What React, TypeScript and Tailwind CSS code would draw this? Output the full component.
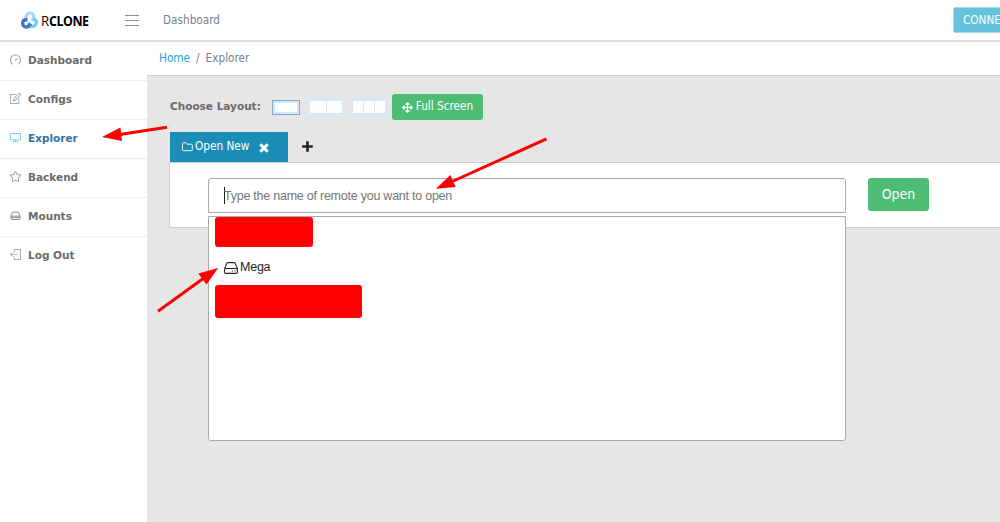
import type { ReactNode } from 'react';
import { FaArrowsAlt } from 'react-icons/fa';
import { SlLogout, SlNote, SlScreenDesktop, SlSpeedometer, SlStar } from 'react-icons/sl';

interface NavItem {
  label: string;
  icon: ReactNode;
  active?: boolean;
}

function DriveIcon() {
  return (
    <svg viewBox="0 0 11 11" className="h-[11px] w-[11px]" fill="none" stroke="currentColor" strokeWidth="1">
      <path d="M1 6.200 2.200 2.800Q2.400 2.200 3 2.200h5q.6 0 .8.600L10 6.200v2.600q0 .7-.7.700H1.700Q1 9.500 1 8.800ZM1 6.200h9M1 7.700h9" />
    </svg>
  );
}

const navItems: NavItem[] = [
  { label: 'Dashboard', icon: <SlSpeedometer /> },
  { label: 'Configs', icon: <SlNote /> },
  { label: 'Explorer', icon: <SlScreenDesktop />, active: true },
  { label: 'Backend', icon: <SlStar /> },
  { label: 'Mounts', icon: <DriveIcon /> },
  { label: 'Log Out', icon: <SlLogout /> },
];

function Logo() {
  return (
    <div className="flex w-[68px] items-center">
      <svg viewBox="0 0 17 19" className="mt-px h-[19px] w-[17px] shrink-0" fill="none" strokeWidth="3.400">
        <path d="M5.700 7.500C4.200 5 6 2 8.900 2c3.200 0 4.700 3 3.300 5.600L10.900 9.800" stroke="#a6dbf8" />
        <path d="M11.800 8c3.300 0 4.400 2.700 3 5.300-1.400 2.900-4.900 3-6.400.5L7.300 11.800" stroke="#70caf2" />
        <path d="M6.500 8.800H4.800C1.700 8.800.9 12.500 2.600 14.700c1.700 2.100 4.700 1.700 6-.6l1-1.500" stroke="#3978ba" />
      </svg>
      <span className="-mt-px ml-[3px] flex font-['Open_Sans',sans-serif] text-[15px] leading-5 text-black">
        <span className="inline-block w-2 origin-left scale-x-[0.88]">R</span>
        <span className="inline-block w-10 origin-left scale-x-[0.83] font-bold tracking-[-0.6px]">CLONE</span>
      </span>
    </div>
  );
}

function Header() {
  return (
    <header className="flex h-[42px] shrink-0 items-center border-b-2 border-[#dce1e5] bg-white pl-[21px]">
      <Logo />
      <svg viewBox="0 0 14 12" className="ml-9 mt-px h-3 w-3.5" stroke="#8493a1" strokeWidth="1.200">
        <path d="M0 .5h14M0 5.500h14M0 10.500h14" />
      </svg>
      <span className="ml-6 pt-px text-[#73818f]">Dashboard</span>
      <button className="-mr-[43px] ml-auto h-[26px] w-[90px] shrink-0 rounded-[2px] border border-[#a9d5e4] bg-[#63c2de] pl-[9px] pt-px text-left text-white">
        CONNECTED
      </button>
    </header>
  );
}

function Sidebar() {
  return (
    <nav className="w-[147px] shrink-0 bg-white font-['DejaVu_Sans',sans-serif] text-[10.5px] tracking-normal">
      {navItems.map((item, i) => (
        <a
          key={item.label}
          className={`flex h-[39px] items-center pl-2.5 font-bold ${i < navItems.length - 1 ? 'border-b border-[#e9edf4]' : 'pb-px'} ${
            item.active ? 'text-[#3572ac]' : 'text-[#6b6b6b]'
          }`}
        >
          <span className={`flex w-[18px] pb-[3px] text-[11px] ${item.active ? 'text-[#56bce3]' : 'text-[#8492a0]'}`}>
            {item.icon}
          </span>
          {item.label}
        </a>
      ))}
    </nav>
  );
}

function LayoutChooser() {
  return (
    <div className="flex h-[26px] items-center">
      <span className="w-[102px] shrink-0 font-['DejaVu_Sans',sans-serif] text-[10.5px] font-bold tracking-normal text-[#6b6b6b]">
        Choose Layout:
      </span>
      <div className="flex h-[15px] w-7 border border-[#86a8c8] bg-[#d4e8fc] p-0.5">
        <i className="flex-1 bg-white" />
      </div>
      <div className="ml-2 flex h-[18px] w-9 gap-px bg-[#d9e9fb] px-[2px] py-[3px]">
        <i className="flex-1 bg-white" />
        <i className="flex-1 bg-white" />
      </div>
      <div className="ml-[7px] flex h-[18px] w-9 gap-px bg-[#d9e9fb] px-[2px] py-[3px]">
        <i className="flex-1 bg-white" />
        <i className="flex-1 bg-white" />
        <i className="flex-1 bg-white" />
      </div>
      <button className="ml-[5px] flex h-[26px] w-[91px] items-center justify-center gap-[3px] rounded-[3px] bg-[#4dbd74] text-white">
        <FaArrowsAlt className="text-[11px]" />
        Full Screen
      </button>
    </div>
  );
}

function RemotePicker() {
  return (
    <div className="relative w-[638px] font-['Liberation_Sans',sans-serif] text-[12.5px] tracking-[-0.24px]">
      <div className="flex h-[35px] items-center rounded-t-[3px] border border-[#aaa] bg-white pl-[15px] text-[#757575]">
        <span className="h-[17px] w-px shrink-0 bg-[#222]" />
        <span className="-ml-px pt-0.5">Type the name of remote you want to open</span>
      </div>
      <div className="absolute left-0 top-[38px] h-[225px] w-full rounded-b-[3px] border border-[#aaa] bg-white pl-1.5">
        <div className="h-[30px] w-[98px] rounded-[3px] bg-[#f00]" />
        <div className="flex h-[38px] items-center gap-0.5 pl-[9px] pt-[3px] text-[#212529]">
          <svg viewBox="0 0 14 12" className="h-3 w-3.5" fill="none" stroke="currentColor" strokeWidth="1.100">
            <path d="M.6 6.500 2.700 1.400Q3 .6 3.800.6h6.400q.8 0 1.100.8l2.100 5.100v3.700q0 1.200-1.200 1.200H1.800Q.6 11.400.6 10.200V7.700q0-1.200 1.200-1.200h10.400q1.200 0 1.200 1.200" />
            <path d="M7.800 9h1.200M10.300 9h1.200" />
          </svg>
          <span>Mega</span>
        </div>
        <div className="h-[33px] w-[147px] rounded-[3px] bg-[#f00]" />
      </div>
    </div>
  );
}

function Explorer() {
  return (
    <div className="pl-[23px] pt-[18px]">
      <LayoutChooser />
      <div className="-ml-px mt-3 flex h-[30px] pl-px">
        <div className="flex w-[118px] items-center bg-[#1a8eb6] pb-px pl-3 text-white">
          <svg viewBox="0 0 11 10" className="mr-0.5 h-2.5 w-[11px]" fill="none" stroke="currentColor" strokeWidth="0.900">
            <path d="M.5 1.600q0-.9.900-.9h2.200q.8 0 .9.900.1.600.8.600h4.100q.9 0 .9.900v4.700q0 .9-.9.900h-8q-.9 0-.9-.9Z" />
          </svg>
          Open New
          <svg viewBox="0 0 10 10" className="ml-2.5 mt-[3px] h-2.5 w-2.5" stroke="currentColor" strokeWidth="3">
            <path d="m1.300 1.300 7.400 7.400M8.700 1.300 1.300 8.700" />
          </svg>
        </div>
        <svg viewBox="0 0 11 11" className="ml-3.5 mt-[9px] h-[11px] w-[11px]" stroke="#1d2529" strokeWidth="2.600">
          <path d="M5.500.2v10.600M.2 5.500h10.600" />
        </svg>
      </div>
      <div className="-ml-px flex h-[66px] border border-r-0 border-[#c8ced3] bg-white pl-[38px] pt-[15px]">
        <RemotePicker />
        <button className="ml-[22px] h-[33px] w-[61px] rounded-[3px] bg-[#4dbd74] text-[14px] text-white">Open</button>
      </div>
    </div>
  );
}

function Arrows() {
  return (
    <svg viewBox="0 0 1000 522" className="pointer-events-none absolute inset-0 h-[522px] w-[1000px]" fill="#f00" stroke="#f00">
      <g strokeWidth="3">
        <path d="M167 127.200 118 134.700" />
        <path d="M546.500 138.800 450 182.500" />
        <path d="M158 311.300 206 276.500" />
      </g>
      <g stroke="none">
        <path d="M102 137 120.500 127.500 122 141Z" />
        <path d="M436 188.800 450.300 175 455.700 187Z" />
        <path d="M218.200 268 198.300 273.500 206.500 284.500Z" />
      </g>
    </svg>
  );
}

export default function App() {
  return (
    <div className="relative flex h-[522px] w-[1000px] flex-col overflow-hidden bg-[#e6e6e6] font-['DejaVu_Sans_Condensed','DejaVu_Sans',sans-serif] text-[11.7px]">
      <Header />
      <div className="flex min-h-0 flex-1">
        <Sidebar />
        <main className="min-w-0 flex-1">
          <div className="flex h-[34px] items-center border-b border-[#c8ced3] bg-white pl-3 text-[#73818f]">
            <a className="text-[#20a8d8]">Home</a>
            <span className="px-1.5">/</span>
            <span>Explorer</span>
          </div>
          <Explorer />
        </main>
      </div>
      <Arrows />
    </div>
  );
}
